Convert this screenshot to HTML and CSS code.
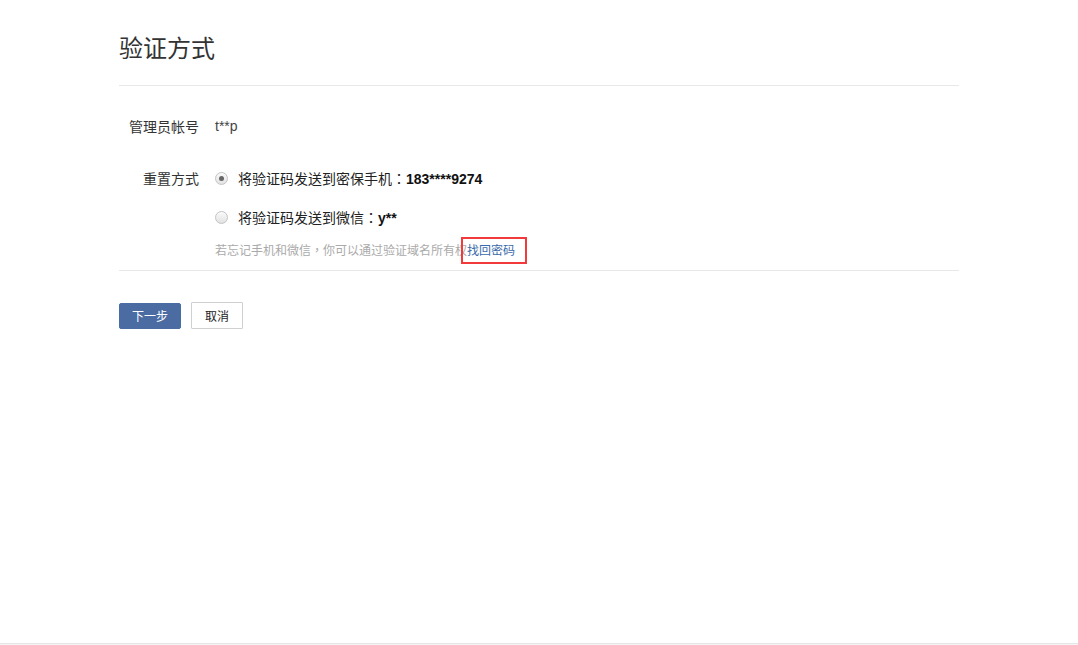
FILE: index.html
```html
<!DOCTYPE html>
<html lang="zh-CN">
<head>
<meta charset="utf-8">
<title>验证方式</title>
<link rel="stylesheet" href="styles.css">
</head>
<body>
<div class="page">
  <div class="container">
    <div class="header">
      <h1 class="title">验证方式</h1>
    </div>
    <div class="form">
      <div class="row row-account">
        <div class="label">管理员帐号</div>
        <div class="value latin">t**p</div>
      </div>
      <div class="row row-method">
        <div class="label">重置方式</div>
        <div class="options">
          <label class="option">
            <span class="radio checked"></span>
            <span class="opt-text">将验证码发送到密保手机<span class="punct" lang="zh-TW">：</span><b class="latin">183****9274</b></span>
          </label>
          <label class="option option-second">
            <span class="radio"></span>
            <span class="opt-text">将验证码发送到微信<span class="punct" lang="zh-TW">：</span><b class="latin">y**</b></span>
          </label>
          <div class="hint">若忘记手机和微信<span class="punct" lang="zh-TW">，</span>你可以通过验证域名所有权<a class="link" href="#">找回密码</a></div>
        </div>
      </div>
    </div>
    <div class="actions">
      <button class="btn btn-primary">下一步</button>
      <button class="btn btn-default">取消</button>
    </div>
  </div>
  <div class="footer-line"></div>
</div>
</body>
</html>
```

FILE: styles.css
```css
html, body {
  margin: 0;
  padding: 0;
  background: #fff;
}
body {
  font-family: "Liberation Sans", "Noto Sans CJK SC", sans-serif;
  color: #333;
  font-size: 14px;
}
.page {
  height: 645px;
  display: flex;
  flex-direction: column;
}
.container {
  width: 840px;
  margin-left: 119px;
  flex: 1;
}
.header {
  padding-top: 30px;
  padding-bottom: 21px;
  border-bottom: 1px solid #e8e8e8;
}
.title {
  margin: 0;
  font-family: "Noto Sans CJK SC", sans-serif;
  font-weight: 400;
  font-size: 24px;
  line-height: 34px;
  color: #333;
}
.form {
  padding-top: 30px;
  padding-bottom: 10px;
  border-bottom: 1px solid #e8e8e8;
}
.row {
  display: flex;
  align-items: flex-start;
}
.row-method {
  margin-top: 32px;
}
.label {
  width: 80px;
  padding-right: 16px;
  text-align: right;
  line-height: 20px;
  font-family: "Noto Sans CJK SC", sans-serif;
  font-size: 14px;
  color: #333;
}
.value {
  line-height: 20px;
  color: #444;
  font-size: 14px;
}
.latin {
  font-family: "Liberation Sans", sans-serif;
}
.punct {
  font-family: "Noto Sans CJK TC", sans-serif;
}
.options {
  display: flex;
  flex-direction: column;
}
.option {
  display: flex;
  align-items: center;
  line-height: 20px;
  height: 20px;
}
.option-second {
  margin-top: 19px;
}
.opt-text {
  font-family: "Noto Sans CJK SC", sans-serif;
  font-size: 14px;
  color: #222;
}
.opt-text b {
  font-weight: 700;
  color: #111;
}
.radio {
  width: 11px;
  height: 11px;
  border-radius: 50%;
  border: 1px solid #c4c4c4;
  background: linear-gradient(#fafafa, #e2e2e2);
  margin-right: 10px;
  position: relative;
  box-sizing: content-box;
}
.radio.checked::after {
  content: "";
  position: absolute;
  left: 3px;
  top: 3px;
  width: 5px;
  height: 5px;
  border-radius: 50%;
  background: #666;
}
.hint {
  margin-top: 13px;
  font-family: "Noto Sans CJK SC", sans-serif;
  font-size: 12px;
  line-height: 20px;
  color: #aaa;
}
.link {
  color: #3a6aa8;
  text-decoration: none;
  position: relative;
}
.link::after {
  content: "";
  position: absolute;
  left: -6px;
  top: -4px;
  width: 62px;
  height: 23px;
  border: 2px solid #f23a3a;
}
.actions {
  display: flex;
  gap: 10px;
  padding-top: 31px;
  align-items: flex-start;
}
.btn {
  font-family: "Noto Sans CJK SC", sans-serif;
  font-size: 12px;
  line-height: 16px;
  padding: 0;
  cursor: pointer;
}
.btn-primary {
  width: 62px;
  height: 26px;
  margin-top: 1px;
  background: #4a6ca3;
  border: 1px solid #4a6ca3;
  color: #fff;
  border-radius: 2px;
}
.btn-default {
  width: 52px;
  height: 27px;
  background: #fff;
  border: 1px solid #cfcfcf;
  color: #222;
  border-radius: 1px;
}
.footer-line {
  height: 1px;
  border-top: 1px solid #e6e6e6;
  background: #f4f4f4;
}
```
